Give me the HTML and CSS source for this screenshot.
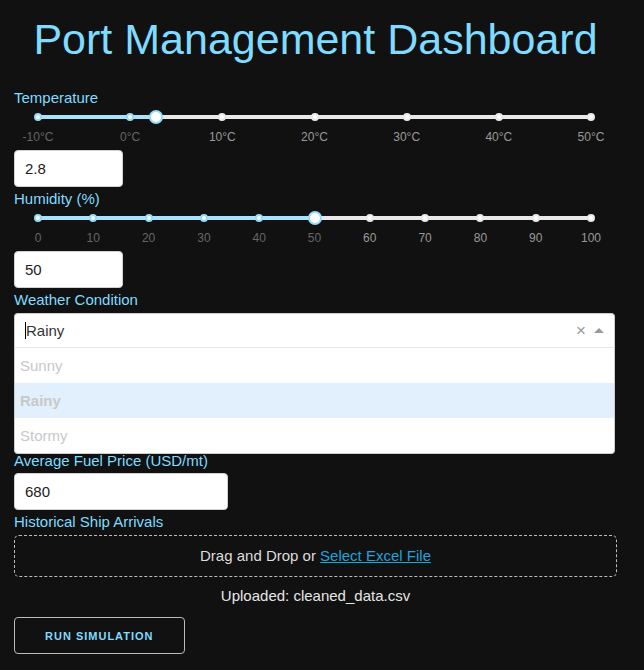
FILE: index.html
```html
<!DOCTYPE html>
<html lang="en">
<head>
<meta charset="utf-8">
<title>Port Management Dashboard</title>
<link rel="stylesheet" href="styles.css">
</head>
<body>
<div class="app">
  <h1 class="title">Port Management Dashboard</h1>

  <label class="field-label">Temperature</label>
  <div class="slider">
    <div class="slider-body">
      <div class="rail"></div>
      <div class="track" style="width:21.333%"></div>
      <span class="dot active" style="left:0%"></span>
      <span class="dot active" style="left:16.667%"></span>
      <span class="dot" style="left:33.333%"></span>
      <span class="dot" style="left:50%"></span>
      <span class="dot" style="left:66.667%"></span>
      <span class="dot" style="left:83.333%"></span>
      <span class="dot" style="left:100%"></span>
      <span class="handle" style="left:21.333%"></span>
      <span class="mark active" style="left:0%">-10°C</span>
      <span class="mark active" style="left:16.667%">0°C</span>
      <span class="mark" style="left:33.333%">10°C</span>
      <span class="mark" style="left:50%">20°C</span>
      <span class="mark" style="left:66.667%">30°C</span>
      <span class="mark" style="left:83.333%">40°C</span>
      <span class="mark" style="left:100%">50°C</span>
    </div>
  </div>
  <input class="num-input" type="text" value="2.8">

  <label class="field-label">Humidity (%)</label>
  <div class="slider">
    <div class="slider-body">
      <div class="rail"></div>
      <div class="track" style="width:50%"></div>
      <span class="dot active" style="left:0%"></span>
      <span class="dot active" style="left:10%"></span>
      <span class="dot active" style="left:20%"></span>
      <span class="dot active" style="left:30%"></span>
      <span class="dot active" style="left:40%"></span>
      <span class="dot active" style="left:50%"></span>
      <span class="dot" style="left:60%"></span>
      <span class="dot" style="left:70%"></span>
      <span class="dot" style="left:80%"></span>
      <span class="dot" style="left:90%"></span>
      <span class="dot" style="left:100%"></span>
      <span class="handle" style="left:50%"></span>
      <span class="mark active" style="left:0%">0</span>
      <span class="mark active" style="left:10%">10</span>
      <span class="mark active" style="left:20%">20</span>
      <span class="mark active" style="left:30%">30</span>
      <span class="mark active" style="left:40%">40</span>
      <span class="mark active" style="left:50%">50</span>
      <span class="mark" style="left:60%">60</span>
      <span class="mark" style="left:70%">70</span>
      <span class="mark" style="left:80%">80</span>
      <span class="mark" style="left:90%">90</span>
      <span class="mark" style="left:100%">100</span>
    </div>
  </div>
  <input class="num-input" type="text" value="50">

  <label class="field-label">Weather Condition</label>
  <div class="dropdown">
    <div class="dd-control">
      <div class="dd-value"><span class="caret"></span>Rainy</div>
      <span class="dd-clear">×</span>
      <span class="dd-arrow"></span>
    </div>
    <div class="dd-menu">
      <div class="dd-option">Sunny</div>
      <div class="dd-option focused">Rainy</div>
      <div class="dd-option">Stormy</div>
    </div>
  </div>

  <label class="field-label">Average Fuel Price (USD/mt)</label>
  <input class="num-input wide" type="text" value="680">

  <label class="field-label">Historical Ship Arrivals</label>
  <div class="upload">Drag and Drop or <a href="#">Select Excel File</a></div>
  <div class="uploaded">Uploaded: cleaned_data.csv</div>

  <button class="run-btn" type="button">Run Simulation</button>
</div>
</body>
</html>
```
FILE: styles.css
```css
html, body {
  margin: 0;
  background: #111111;
}
body {
  font-family: "Liberation Sans", Arial, sans-serif;
  font-size: 15px;
  color: #dddddd;
}
.app {
  padding: 0 27px 0 14px;
}
.title {
  margin: 14px 0 24px;
  font-size: 43px;
  line-height: 50px;
  font-weight: 400;
  color: #7FDBFF;
  text-align: center;
}
.field-label {
  display: block;
  margin-top: 2px;
  line-height: 20px;
  font-size: 15px;
  color: #7FDBFF;
}
.slider {
  height: 42px;
  padding: 0 26px 0 24px;
}
.slider-body {
  position: relative;
  height: 100%;
}
.rail {
  position: absolute;
  left: 0;
  right: 0;
  top: 7px;
  height: 4px;
  border-radius: 2px;
  background: #e9e9e9;
}
.track {
  position: absolute;
  left: 0;
  top: 7px;
  height: 4px;
  border-radius: 2px;
  background: #abe2fb;
}
.dot {
  position: absolute;
  top: 5px;
  width: 8px;
  height: 8px;
  margin-left: -4px;
  box-sizing: border-box;
  border: 2px solid #e9e9e9;
  border-radius: 50%;
  background: #fff;
}
.dot.active {
  border-color: #96dbfa;
}
.handle {
  position: absolute;
  top: 2px;
  width: 14px;
  height: 14px;
  margin-left: -7px;
  box-sizing: border-box;
  border: 2px solid #96dbfa;
  border-radius: 50%;
  background: #fff;
}
.mark {
  position: absolute;
  top: 22px;
  font-size: 12px;
  line-height: 14px;
  color: #999;
  transform: translateX(-50%);
  white-space: nowrap;
}
.mark.active {
  color: #666;
}
.num-input {
  display: block;
  box-sizing: border-box;
  width: 109px;
  height: 37px;
  margin: 0;
  padding: 0 10px;
  border: 1px solid #d1d1d1;
  border-radius: 4px;
  background: #fff;
  font: 15px "Liberation Sans", Arial, sans-serif;
  color: #222;
  outline: none;
}
.num-input.wide {
  width: 214px;
  margin-top: 2px;
}
.dropdown {
  position: relative;
  z-index: 1;
  margin: 3px 2px -5px 0;
}
.dd-control {
  display: flex;
  align-items: center;
  box-sizing: border-box;
  height: 35px;
  padding: 0 10px;
  border: 1px solid #ccc;
  border-bottom-color: #e6e6e6;
  border-radius: 4px 4px 0 0;
  background: #fff;
}
.dd-value {
  flex: 1;
  display: flex;
  align-items: center;
  color: #333;
}
.caret {
  width: 1px;
  height: 17px;
  background: #000;
}
.dd-clear {
  color: #999;
  font-size: 17px;
  line-height: 17px;
  margin-right: 8px;
}
.dd-arrow {
  width: 0;
  height: 0;
  border-left: 5px solid transparent;
  border-right: 5px solid transparent;
  border-bottom: 5px solid #999;
}
.dd-menu {
  border: 1px solid #ccc;
  border-top: 0;
  border-radius: 0 0 4px 4px;
  background: #fff;
}
.dd-option {
  height: 35px;
  line-height: 35px;
  padding-left: 5px;
  color: #c8c8c8;
}
.dd-option.focused {
  background: #e2f0fd;
  font-weight: 700;
}
.upload {
  margin-top: 3px;
  height: 42px;
  box-sizing: border-box;
  border: 1px dashed #bbb;
  border-radius: 5px;
  text-align: center;
  line-height: 40px;
  color: #ddd;
}
.upload a {
  color: #1fa3dd;
  text-decoration: underline;
}
.uploaded {
  margin-top: 9px;
  line-height: 20px;
  text-align: center;
  color: #e6e6e6;
}
.run-btn {
  display: block;
  margin-top: 11px;
  height: 37px;
  padding: 0 30px;
  box-sizing: border-box;
  border: 1px solid #bbb;
  border-radius: 4px;
  background: transparent;
  color: #7FDBFF;
  font: 700 11px "Liberation Sans", Arial, sans-serif;
  letter-spacing: 1px;
  text-transform: uppercase;
}
```
